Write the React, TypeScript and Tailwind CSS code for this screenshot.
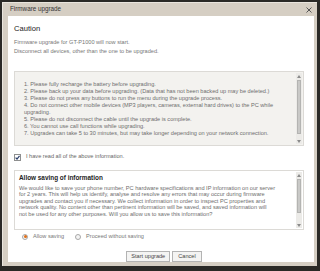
import React from "react";

const ScrollBar = ({ thumbTop, thumbH }: { thumbTop: number; thumbH: number }) => (
  <div className="absolute right-[1px] top-[1px] bottom-[1px] w-[6px] bg-[#ecebe8] flex flex-col items-center">
    <div className="h-[6px] w-full flex items-center justify-center">
      <svg width="4" height="3" viewBox="0 0 4 3"><path d="M0 3 L2 0 L4 3 Z" fill="#8a8a8a" /></svg>
    </div>
    <div className="relative flex-1 w-full">
      <div
        className="absolute left-[1px] right-[1px] bg-[#c9c9c7] border border-[#b4b4b2]"
        style={{ top: thumbTop, height: thumbH }}
      />
    </div>
    <div className="h-[6px] w-full flex items-center justify-center">
      <svg width="4" height="3" viewBox="0 0 4 3"><path d="M0 0 L2 3 L4 0 Z" fill="#8a8a8a" /></svg>
    </div>
  </div>
);

export default function App() {
  const font = { fontFamily: '"Liberation Sans", Arial, sans-serif' };
  return (
    <div className="w-[320px] h-[271px] bg-[#2a2926] pt-[2px] pl-[2px] overflow-hidden" style={font}>
      <div className="w-[315px] h-[264px] bg-[#d5cec3] border-l border-t border-[#e9e5de] flex flex-col">
        {/* title bar */}
        <div className="h-[13px] flex items-center justify-between pl-[7px] pr-[5px]">
          <span className="text-[6.3px] leading-none text-[#333]">Firmware upgrade</span>
          <svg width="6" height="6" viewBox="0 0 6 6">
            <path d="M0.5 0.5 L5.5 5.5 M5.5 0.5 L0.5 5.5" stroke="#555" strokeWidth="1" />
          </svg>
        </div>
        {/* body */}
        <div className="ml-[5px] mr-[3px] h-[246px] bg-white flex flex-col">
          <div className="pl-[6px] pr-[10px] pt-[8px]">
            <div className="text-[7.6px] leading-[10px] text-[#222]">Caution</div>
            <div className="mt-[4px] text-[5.6px] leading-[9px] text-[#777]">
              <div>Firmware upgrade for GT-P1000 will now start.</div>
              <div>Disconnect all devices, other than the one to be upgraded.</div>
            </div>
            {/* notice box */}
            <div className="relative mt-[15px] h-[75px] bg-[#f3f2ef] border border-[#dcdad6] pl-[9px] pr-[10px] pt-[9px] text-[5.6px] leading-[7px] text-[#6e6e6e] whitespace-nowrap">
              <div>1. Please fully recharge the battery before upgrading.</div>
              <div>2. Please back up your data before upgrading. (Data that has not been backed up may be deleted.)</div>
              <div>3. Please do not press any buttons to run the menu during the upgrade process.</div>
              <div>4. Do not connect other mobile devices (MP3 players, cameras, external hard drives) to the PC while</div>
              <div>upgrading.</div>
              <div>5. Please do not disconnect the cable until the upgrade is complete.</div>
              <div>6. You cannot use call functions while upgrading.</div>
              <div>7. Upgrades can take 5 to 30 minutes, but may take longer depending on your network connection.</div>
              <ScrollBar thumbTop={1} thumbH={54} />
            </div>
            {/* checkbox */}
            <div className="mt-[7px] flex items-center h-[8px]">
              <div className="w-[7px] h-[7px] border border-[#8e8f8f] bg-white flex items-center justify-center">
                <svg width="5" height="5" viewBox="0 0 5 5">
                  <path d="M0.6 2.6 L2 4 L4.5 0.8" stroke="#2b3f6b" strokeWidth="1.2" fill="none" />
                </svg>
              </div>
              <span className="ml-[5px] text-[5.6px] leading-none text-[#666]">I have read all of the above information.</span>
            </div>
            {/* saving box */}
            <div className="relative mt-[9px] h-[60px] bg-white border border-[#dcdad6] pl-[4px] pr-[10px] pt-[3px]">
              <div className="text-[6.4px] leading-[8px] font-bold text-[#222]">Allow saving of information</div>
              <div className="mt-[3px] text-[5.6px] leading-[6.4px] text-[#6e6e6e] whitespace-nowrap">
                <div>We would like to save your phone number, PC hardware specifications and IP information on our server</div>
                <div>for 2 years. This will help us identify, analyse and resolve any errors that may occur during firmware</div>
                <div>upgrades and contact you if necessary. We collect information in order to inspect PC properties and</div>
                <div>network quality. No content other than pertinent information will be saved, and saved information will</div>
                <div>not be used for any other purposes. Will you allow us to save this information?</div>
              </div>
              <ScrollBar thumbTop={1} thumbH={34} />
            </div>
            {/* radios */}
            <div className="mt-[3px] h-[7px] flex items-center pl-[8px] text-[5.6px] leading-none text-[#777]">
              <div className="w-[6px] h-[6px] rounded-full border border-[#a8a8a8] bg-[#f4f4f4] flex items-center justify-center">
                <div className="w-[3px] h-[3px] rounded-full bg-[#e0701a]" />
              </div>
              <span className="ml-[5px]">Allow saving</span>
              <div className="ml-[11px] w-[6px] h-[6px] rounded-full border border-[#a8a8a8] bg-[#f4f4f4]" />
              <span className="ml-[5px]">Proceed without saving</span>
            </div>
          </div>
          {/* separator */}
          <div className="mt-[8px] h-px bg-[#e4e4e4]" />
          {/* buttons */}
          <div className="mt-[3px] flex justify-center gap-[2px] pl-[6px]">
            <div className="h-[11px] px-[4px] flex items-center border border-[#b3b3b3] bg-[#f4f4f3] text-[5.6px] leading-none text-[#444]">Start upgrade</div>
            <div className="h-[11px] px-[5px] flex items-center border border-[#b3b3b3] bg-[#f4f4f3] text-[5.6px] leading-none text-[#444]">Cancel</div>
          </div>
        </div>
      </div>
    </div>
  );
}
